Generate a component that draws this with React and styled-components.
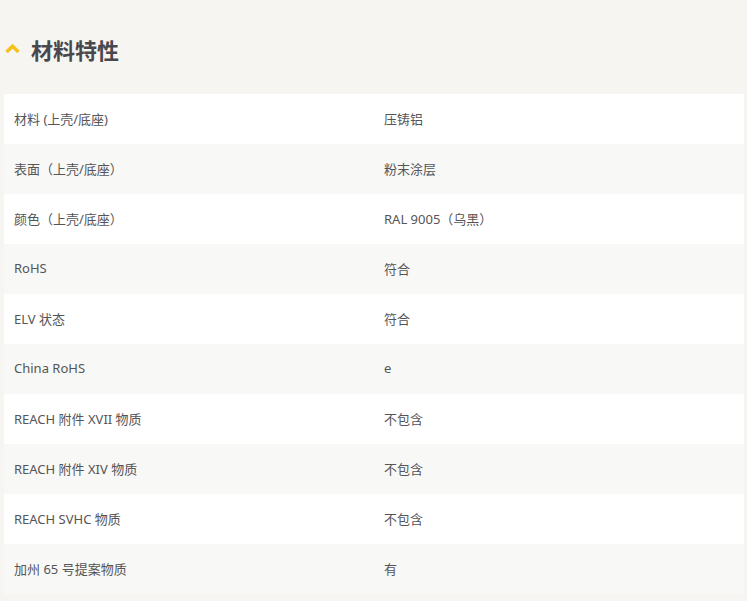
import React from 'react'
import styled, { createGlobalStyle } from 'styled-components'

const GlobalStyle = createGlobalStyle`
    body {
        margin:0;
        background-color:#f6f5f2;
        font-family:"Noto Sans", "Noto Sans CJK SC", sans-serif;
    }
`

const Container = styled.div`
    width:747px;
    padding:0 3px 0 4px;
    box-sizing:border-box;
`

const Header = styled.div`
    height:94px;
    display:flex;
    align-items:center;
    gap:11px;
    padding-left:1px;
    padding-top:4px;
    box-sizing:border-box;
`

const Title = styled.h2`
    margin:0;
    font-size:22px;
    font-weight:700;
    color:#48484d;
    font-family:"Noto Sans CJK SC", sans-serif;
`

const Table = styled.div`
    display:flex;
    flex-direction:column;
`

const Row = styled.div`
    height:50px;
    display:grid;
    grid-template-columns:1fr 1fr;
    align-items:center;
    background-color:${p => (p.$odd ? '#ffffff' : '#f8f8f6')};
`

const Cell = styled.div`
    padding:0 0 2px 10px;
    font-size:13px;
    color:#555558;
    font-family:"Noto Sans", "Noto Sans CJK SC", sans-serif;
`

const Chevron = () => (
    <svg width="15" height="10" viewBox="0 0 15 10">
        <path d="M1.5 8 L7.5 2.2 L13.5 8" fill="none" stroke="#f7c01c" strokeWidth="3.5" />
    </svg>
)

const rows = [
    ['材料 (上壳/底座)', '压铸铝'],
    ['表面（上壳/底座）', '粉末涂层'],
    ['颜色（上壳/底座）', 'RAL 9005（乌黑）'],
    ['RoHS', '符合'],
    ['ELV 状态', '符合'],
    ['China RoHS', 'e'],
    ['REACH 附件 XVII 物质', '不包含'],
    ['REACH 附件 XIV 物质', '不包含'],
    ['REACH SVHC 物质', '不包含'],
    ['加州 65 号提案物质', '有'],
]

function App() {
    return (
        <Container>
            <GlobalStyle />
            <Header>
                <Chevron />
                <Title>材料特性</Title>
            </Header>
            <Table>
                {rows.map(([k, v], i) => (
                    <Row key={k} $odd={i % 2 === 0}>
                        <Cell>{k}</Cell>
                        <Cell>{v}</Cell>
                    </Row>
                ))}
            </Table>
        </Container>
    )
}

export default App
